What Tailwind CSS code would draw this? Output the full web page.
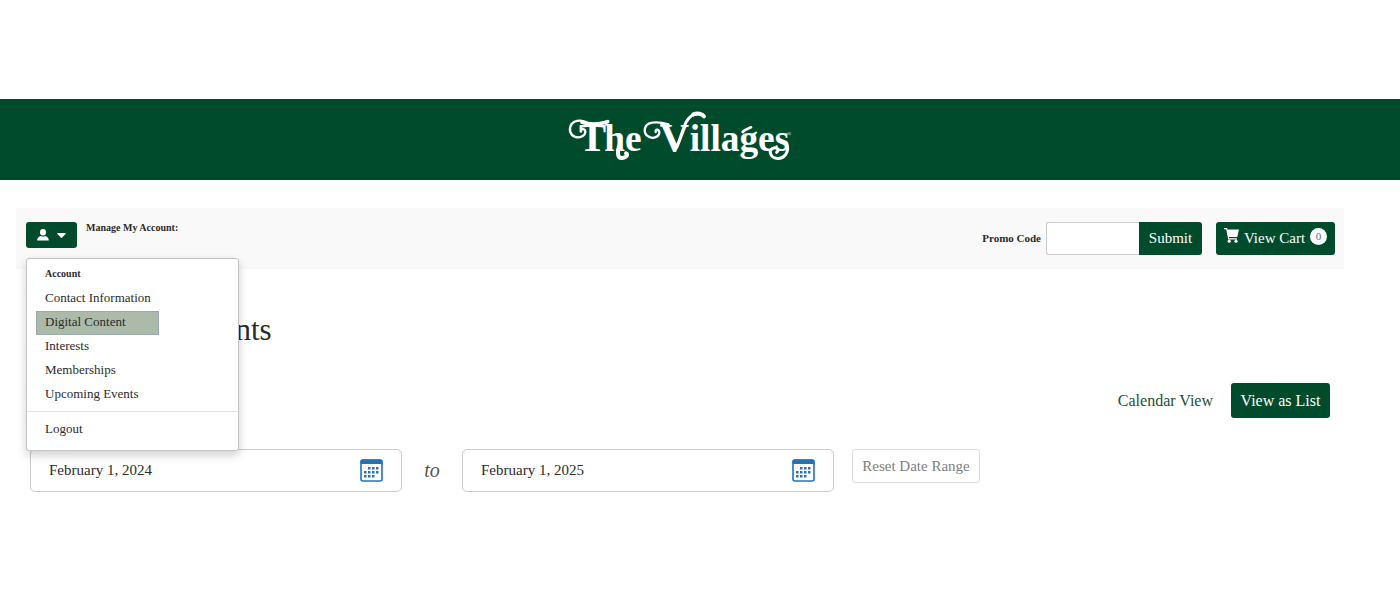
<!DOCTYPE html>
<html lang="en">
<head>
    <meta charset="UTF-8">
    <meta name="viewport" content="width=device-width, initial-scale=1.0">
    <title>Calendar of Events - The Villages</title>
    <script src="https://cdn.jsdelivr.net/npm/@tailwindcss/browser@4"></script>
</head>
<body class="bg-white font-['Liberation_Serif',serif] text-[#2b2b2b]">
    <!-- Brand header -->
    <header class="mt-[99px] flex justify-center bg-[#004b2c] pt-px pr-10">
        <a href="#" aria-label="The Villages">
            <svg class="h-20 w-60" viewBox="0 0 720 240" fill="#fff" font-family="Liberation Serif, serif" font-weight="700">
                <text y="152" font-size="112"><tspan x="57" font-size="122">T</tspan><tspan x="133">he</tspan><tspan x="299" font-size="122">V</tspan><tspan x="389">illages</tspan></text>
                <text x="681" y="108" font-size="16" font-weight="400">®</text>
                <g fill="none" stroke="#fff" stroke-linecap="round" stroke-linejoin="round">
                    <path stroke-width="7" d="M88 74C74 60 48 57 35 72C25 86 30 106 46 111C61 115 77 106 76 94C74 85 62 86 63 94"/>
                    <path stroke-width="11" d="M66 67C84 73 106 77 143 65"/>
                    <path stroke-width="7" d="M325 73C300 66 280 66 266 71C251 79 250 101 264 109C279 119 299 110 298 96C296 86 285 88 287 96"/>
                    <path stroke-width="9" d="M305 72L325 76"/>
                    <path stroke-width="9" d="M350 142C362 116 368 86 379 65C391 45 409 36 429 45"/>
                    <path stroke-width="12" d="M400 43C412 38 426 41 432 49"/>
                    <path stroke-width="12" d="M177 138C171 162 174 176 187 174C199 172 206 164 198 160"/>
                    <path stroke-width="9" d="M678 130C693 156 670 178 649 175C630 171 625 151 638 145C650 140 660 150 650 157"/>
                    <path stroke-width="8" d="M548 96C555 88 563 86 573 82"/>
                </g>
            </svg>
        </a>
    </header>

    <div class="mt-7 mr-14 ml-4">
        <!-- Account toolbar -->
        <div class="flex items-start justify-between bg-[#f9f9f9] py-3.5 pr-[9px] pl-2.5">
            <div class="relative flex items-start">
                <button type="button" aria-label="Account menu" aria-expanded="true" class="flex h-[26px] w-[51px] items-center justify-center gap-2 rounded-[3px] bg-[#004b2c] text-white">
                    <svg class="h-3 w-3" viewBox="0 0 12 12" fill="currentColor"><ellipse cx="6" cy="3.200" rx="3" ry="3.200"/><path d="M.2 11.500C.2 8.800 1.700 7.200 4 6.900q2 1 4 0c2.300.3 3.800 1.900 3.800 4.600z"/></svg>
                    <svg class="h-[5px] w-[9px]" viewBox="0 0 9 5" fill="currentColor"><path d="M.5 0h8q.7.2.3.8L5.200 4.600q-.7.6-1.400 0L.2.8Q-.2.2.5 0z"/></svg>
                </button>
                <span class="ml-[9px] text-[10px] leading-3 font-bold">Manage My Account:</span>

                <!-- Dropdown -->
                <nav class="absolute top-9 left-0 z-10 w-[213px] rounded-[3px] border border-[#c4c4c4] bg-white pt-1 pb-2 text-[13px] leading-[22px] shadow-[0_4px_10px_rgba(0,0,0,0.2)]">
                    <h2 class="mx-[9px] h-6 px-[9px] text-[10px] font-bold">Account</h2>
                    <a href="#" class="mx-[9px] block h-6 px-[9px]">Contact Information</a>
                    <a href="#" class="mx-[9px] block h-6 w-[123px] bg-[#abbaa9] px-[9px] outline -outline-offset-1 outline-[#9aabb0]">Digital Content</a>
                    <a href="#" class="mx-[9px] block h-6 px-[9px]">Interests</a>
                    <a href="#" class="mx-[9px] block h-6 px-[9px]">Memberships</a>
                    <a href="#" class="mx-[9px] block h-6 px-[9px]">Upcoming Events</a>
                    <hr class="mt-1 mb-1.5 border-[#e2e2e2]">
                    <a href="#" class="mx-[9px] block h-6 px-[9px]">Logout</a>
                </nav>
            </div>

            <div class="flex items-center">
                <form class="flex items-center">
                    <label for="promo" class="mr-[5px] text-[11px] font-bold">Promo Code</label>
                    <input type="text" id="promo" name="promo" class="h-[33px] w-[93px] rounded-l-[3px] border border-r-0 border-[#ccc] bg-white px-2 text-[15px]">
                    <button type="submit" class="h-[33px] w-[63px] rounded-r-[3px] bg-[#004b2c] text-[15px] text-white">Submit</button>
                </form>
                <button type="button" class="ml-3.5 flex h-[33px] w-[119px] items-center justify-center gap-[5px] rounded-[3px] bg-[#004b2c] text-[15px] text-white">
                    <svg class="mb-1.5 h-[15px] w-[15px]" viewBox="0 0 15 15" fill="currentColor"><path d="M0 0h3l.6 1.500H15L13.300 9H4.900l.3 1.300H13v1.200H4.200L2.200 1.300H0z"/><circle cx="5.200" cy="13.200" r="1.600"/><circle cx="12" cy="13.200" r="1.600"/></svg>
                    <span>View Cart</span>
                    <span class="mb-1 flex size-[17px] items-center justify-center rounded-full bg-white text-[11px] text-[#3d7097]">0</span>
                </button>
            </div>
        </div>

        <main class="pr-3.5 pl-3.5">
            <h1 class="mt-[41px] pl-1 text-[31px] leading-10">Calendar of Events</h1>

            <div class="mt-[33px] flex items-center justify-end gap-[18px] text-base">
                <a href="#" class="text-[#1d5039]">Calendar View</a>
                <a href="#" class="flex h-[35px] w-[99px] items-center justify-center rounded-[3px] bg-[#004b2c] text-white">View as List</a>
            </div>

            <!-- Date range -->
            <form class="mt-[31px] flex items-start text-[15px]">
                <div class="flex h-[43px] w-[372px] items-center rounded-[5px] border border-[#ccc] px-[18px]">
                    <input type="text" aria-label="Start date" value="February 1, 2024" class="min-w-0 flex-1 bg-transparent">
                    <button type="button" aria-label="Pick start date">
                        <svg class="h-[23px] w-[23px]" viewBox="0 0 23 23" fill="#2474b5"><rect x="1" y="1" width="21" height="21" rx="2" fill="#fff" stroke="#2474b5" stroke-width="1.600"/><path d="M.5 5V2q0-1.500 1.500-1.500h19q1.500 0 1.500 1.500v3z"/><path d="M8 8h2.500v2.500H8zM12 8h2.500v2.500H12zM16 8h2.500v2.500H16zM4 12h2.500v2.500H4zM8 12h2.500v2.500H8zM12 12h2.500v2.500H12zM16 12h2.500v2.500H16zM4 16h2.500v2.500H4zM8 16h2.500v2.500H8zM12 16h2.500v2.500H12z"/></svg>
                    </button>
                </div>
                <span class="w-[60px] text-center text-xl leading-[43px] text-[#555] italic">to</span>
                <div class="flex h-[43px] w-[372px] items-center rounded-[5px] border border-[#ccc] px-[18px]">
                    <input type="text" aria-label="End date" value="February 1, 2025" class="min-w-0 flex-1 bg-transparent">
                    <button type="button" aria-label="Pick end date">
                        <svg class="h-[23px] w-[23px]" viewBox="0 0 23 23" fill="#2474b5"><rect x="1" y="1" width="21" height="21" rx="2" fill="#fff" stroke="#2474b5" stroke-width="1.600"/><path d="M.5 5V2q0-1.500 1.500-1.500h19q1.500 0 1.500 1.500v3z"/><path d="M8 8h2.500v2.500H8zM12 8h2.500v2.500H12zM16 8h2.500v2.500H16zM4 12h2.500v2.500H4zM8 12h2.500v2.500H8zM12 12h2.500v2.500H12zM16 12h2.500v2.500H16zM4 16h2.500v2.500H4zM8 16h2.500v2.500H8zM12 16h2.500v2.500H12z"/></svg>
                    </button>
                </div>
                <button type="reset" class="ml-[18px] h-[34px] w-32 rounded-[3px] border border-[#ddd] text-[#808080]">Reset Date Range</button>
            </form>
        </main>
    </div>
</body>
</html>
